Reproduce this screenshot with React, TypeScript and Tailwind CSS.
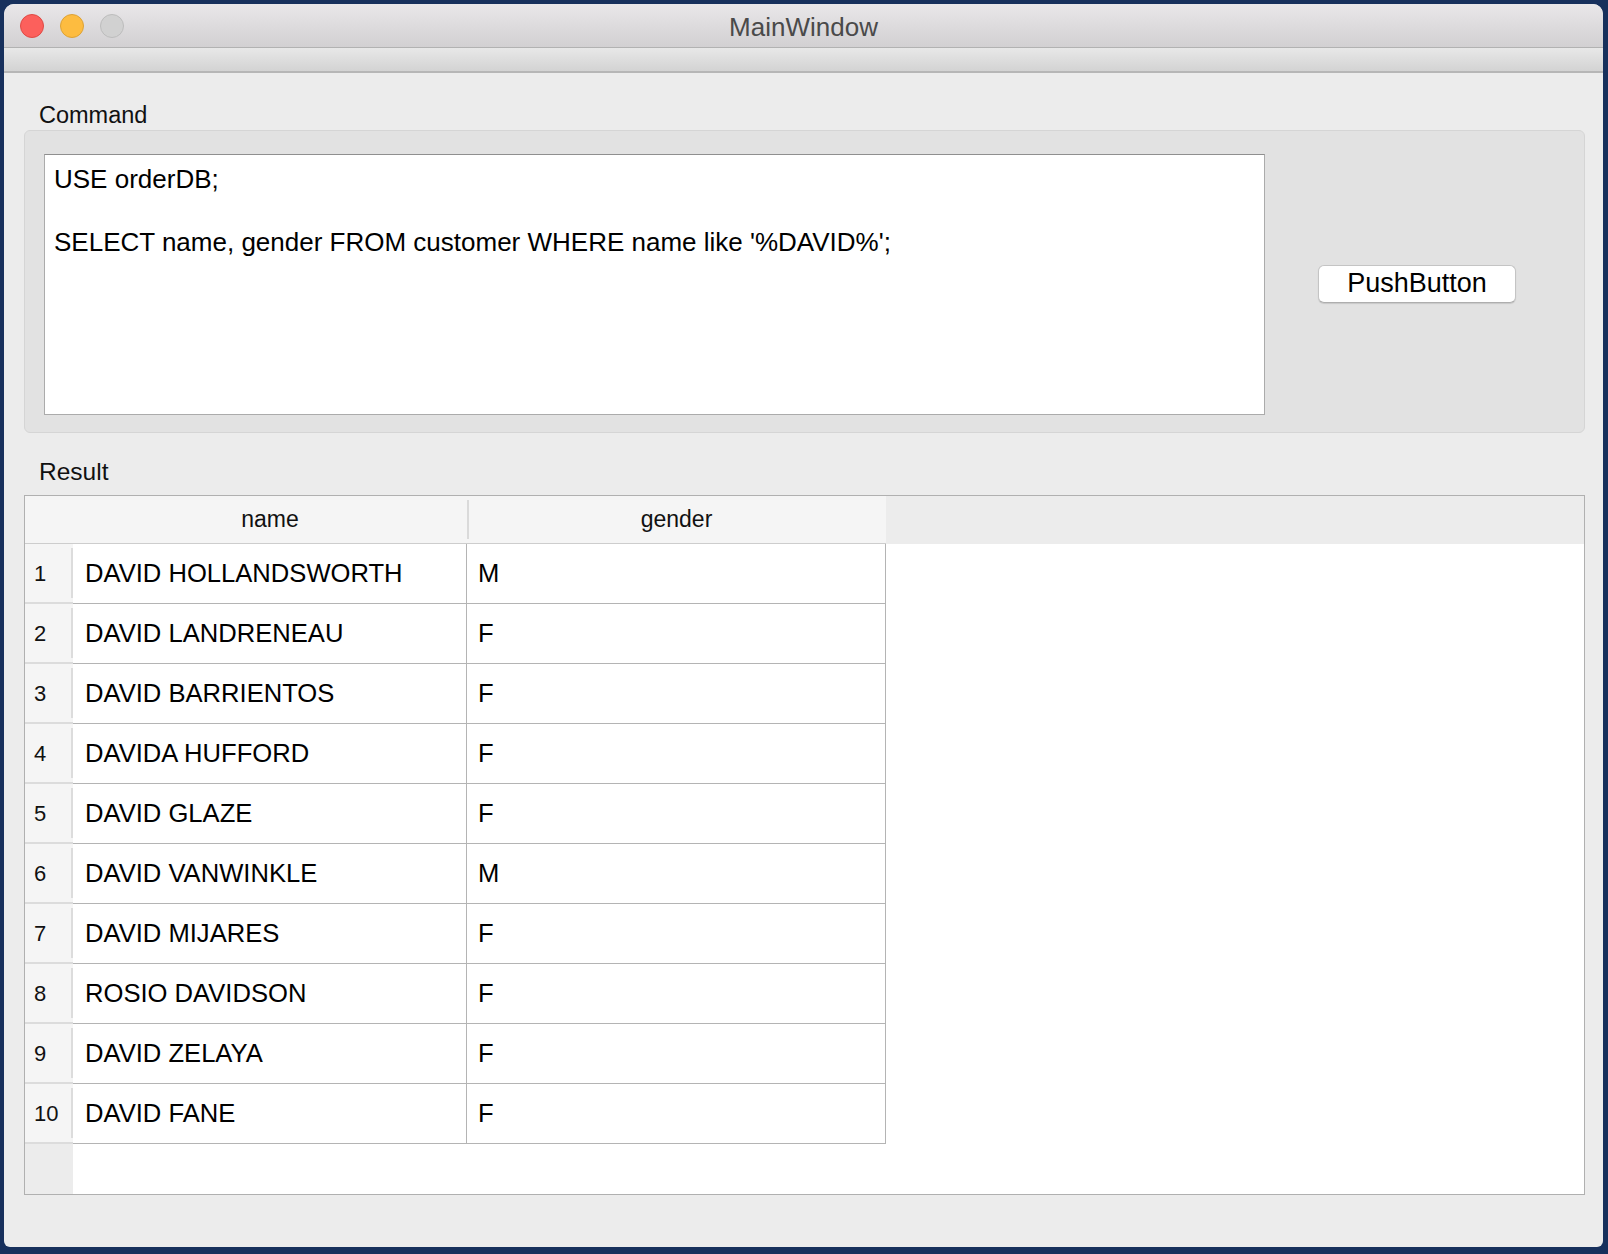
import React from 'react';

type Row = { name: string; gender: string };

const rows: Row[] = [
  { name: 'DAVID HOLLANDSWORTH', gender: 'M' },
  { name: 'DAVID LANDRENEAU', gender: 'F' },
  { name: 'DAVID BARRIENTOS', gender: 'F' },
  { name: 'DAVIDA HUFFORD', gender: 'F' },
  { name: 'DAVID GLAZE', gender: 'F' },
  { name: 'DAVID VANWINKLE', gender: 'M' },
  { name: 'DAVID MIJARES', gender: 'F' },
  { name: 'ROSIO DAVIDSON', gender: 'F' },
  { name: 'DAVID ZELAYA', gender: 'F' },
  { name: 'DAVID FANE', gender: 'F' },
];

const font = { fontFamily: '"Liberation Sans", Arial, sans-serif' };

const TrafficLights = () => (
  <div className="flex gap-[16px] pl-[16px] pt-[1px]">
    <span className="w-[24px] h-[24px] rounded-full bg-[#fc605c] border border-[#de4a45]" />
    <span className="w-[24px] h-[24px] rounded-full bg-[#fdbc40] border border-[#dca236]" />
    <span className="w-[24px] h-[24px] rounded-full bg-[#d1d1d1] border border-[#bcbcbc]" />
  </div>
);

const ResultTable = () => (
  <div className="mt-[9px] h-[700px] border border-[#b0b0b0] bg-white flex flex-col">
    {/* header */}
    <div className="flex h-[48px] shrink-0 bg-[#ececec]">
      <div className="w-[48px] bg-[#f5f5f5] border-b border-[#cdcdcd]" />
      <div className="w-[394px] bg-[#f5f5f5] border-b border-[#cdcdcd] flex items-center justify-center text-[23px] text-[#111]">
        name
      </div>
      <div className="w-[419px] bg-[#f5f5f5] border-b border-[#cdcdcd] flex items-center justify-center text-[23px] text-[#111] relative">
        <span className="absolute left-0 top-[4px] bottom-[4px] w-[2px] bg-[#dadada]" />
        gender
      </div>
    </div>
    {/* body */}
    {rows.map((r, i) => (
      <div key={i} className="flex h-[60px] shrink-0">
        <div className="w-[48px] bg-[#f5f5f5] border-b-2 border-[#dcdcdc] relative flex items-center pl-[9px] text-[22px] text-[#111]">
          <span className="absolute right-0 top-[4px] bottom-[4px] w-[2px] bg-[#dcdcdc]" />
          {i + 1}
        </div>
        <div className="w-[394px] border-b border-r border-[#b4b4b4] flex items-center pl-[12px] text-[25.6px] text-black">
          {r.name}
        </div>
        <div className="w-[419px] border-b border-r border-[#b4b4b4] flex items-center pl-[11px] text-[25.6px] text-black">
          {r.gender}
        </div>
      </div>
    ))}
    <div className="flex flex-1">
      <div className="w-[48px] bg-[#ececec]" />
    </div>
  </div>
);

export default function App() {
  return (
    <div className="w-[1608px] h-[1254px] bg-[#17305c] pl-[4px] pt-[4px] overflow-hidden" style={font}>
      <div className="w-[1599px] h-[1243px] rounded-t-[10px] rounded-b-[6px] overflow-hidden bg-[#ececec] flex flex-col">
        {/* title bar */}
        <div className="h-[44px] shrink-0 bg-gradient-to-b from-[#e9e7e9] to-[#d2d0d2] border-b border-[#b2b2b2] relative flex items-center">
          <TrafficLights />
          <div className="absolute inset-0 pt-[3px] flex items-center justify-center text-[26px] text-[#4a4a4a]">
            MainWindow
          </div>
        </div>
        {/* toolbar strip */}
        <div className="h-[25px] shrink-0 bg-gradient-to-b from-[#e8e8e8] to-[#d3d3d3] border-b-2 border-[#b6b6b6]" />

        {/* content */}
        <div className="flex-1 pl-[20px] pr-[18px] pt-[28px]">
          <div className="h-[28px] leading-[28px] pl-[15px] text-[23.5px] text-[#111]">Command</div>
          <div className="mt-[1px] h-[303px] rounded-[6px] bg-[#e2e2e2] border border-[#d5d5d5] flex pl-[19px] pt-[23px] pb-[17px]">
            <div className="w-[1221px] h-full bg-white border border-[#ababab] border-t-[#8f8f8f] pl-[9px] pt-[9px] text-[26px] leading-[31.5px] text-black">
              <div>USE orderDB;</div>
              <div>&nbsp;</div>
              <div>SELECT name, gender FROM customer WHERE name like '%DAVID%';</div>
            </div>
            <div className="ml-[53px] w-[198px] h-[38px] self-center mt-[-2px] rounded-[6px] bg-white border border-[#c4c4c4] border-b-[#aeaeae] shadow-[0_1px_1px_rgba(0,0,0,0.12)] flex items-center justify-center text-[27px] text-black">
              PushButton
            </div>
          </div>

          <div className="mt-[25px] h-[28px] leading-[28px] pl-[15px] text-[24.5px] text-[#111]">Result</div>
          <ResultTable />
        </div>
      </div>
    </div>
  );
}
